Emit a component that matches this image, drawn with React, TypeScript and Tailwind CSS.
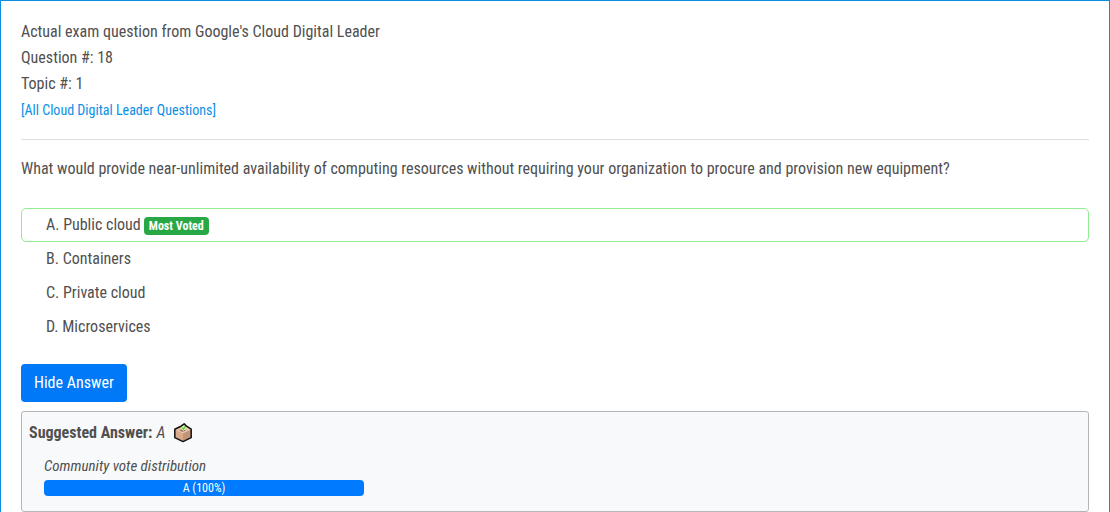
const choices = [
  { letter: "A", text: "Public cloud", mostVoted: true },
  { letter: "B", text: "Containers", mostVoted: false },
  { letter: "C", text: "Private cloud", mostVoted: false },
  { letter: "D", text: "Microservices", mostVoted: false },
];

const votes = [{ answer: "A", percent: 100 }];

function BallotBoxIcon() {
  return (
    <svg viewBox="0 0 20 20" className="block h-5 w-5" role="img" aria-label="Community vote">
      <path d="M2 6.2 10 10v8.5l-8-4z" fill="#d9ab8e" />
      <path d="M18 6.2 10 10v8.5l8-4z" fill="#c39376" />
      <path d="M2 6.2 8.5 3h4.5l5 3.2-8 4z" fill="#e9c8ae" />
      <path d="M6 6.8h7.5L11 8.4H8z" fill="#94715c" />
      <path d="m7.5 5 3.5-4.2L14.5 4 10.5 8z" fill="#dcf7b4" />
      <path d="m9 4.6 1.4 1.5 2.2-3" fill="none" stroke="#5cc524" strokeWidth="1.3" />
      <path
        d="M8 3.2 1.8 6.2v8.4L10 18.6l8.2-4V6.2L13.5 3.2 11.2.9z"
        fill="none"
        stroke="#111"
        strokeWidth="1.5"
        strokeLinejoin="round"
      />
    </svg>
  );
}

export default function App() {
  return (
    <main className="min-h-screen border-x border-t border-[#0a90e0] bg-white px-5 pt-[18px] font-['Roboto_Condensed',Roboto,sans-serif] text-base leading-[26px] text-[#505050]">
      <header className="border-b border-[#dfdfdf] pb-[15px]">
        <p>Actual exam question from Google's Cloud Digital Leader</p>
        <p>Question #: 18</p>
        <p>Topic #: 1</p>
        <a href="#questions" className="block text-sm leading-[27px] text-[#0a90e6]">
          [All Cloud Digital Leader Questions]
        </a>
      </header>

      <p className="pt-4">
        What would provide near-unlimited availability of computing resources without requiring your
        organization to procure and provision new equipment?
      </p>

      <ul className="mt-[26px]">
        {choices.map((c) => (
          <li
            key={c.letter}
            className={
              c.mostVoted
                ? "flex h-[34px] items-center gap-[3px] rounded-[5px] border border-[#90ee90] px-6"
                : "flex h-[34px] items-center gap-[3px] border border-transparent px-6"
            }
          >
            <span>
              {c.letter}. {c.text}
            </span>
            {c.mostVoted && (
              <span className="mt-0.5 rounded bg-[#28a745] px-[5px] text-xs leading-[18px] font-bold text-white">
                Most Voted
              </span>
            )}
          </li>
        ))}
      </ul>

      <button
        type="button"
        className="mt-5 block h-[38px] rounded bg-[#0079f8] px-[13px] text-base text-white"
      >
        Hide Answer
      </button>

      <section className="mt-[9px] rounded-[3px] border border-[#b4b7b9] bg-[#f8f9fa] px-[7px] pt-2 pb-[15px]">
        <div className="flex items-center gap-1">
          <strong className="font-bold">Suggested Answer:</strong>
          <em>A</em>
          <span className="ml-1">
            <BallotBoxIcon />
          </span>
        </div>
        <div className="ml-[15px] w-80 pt-2">
          <p className="pb-0.5 text-[15px] leading-6 italic">Community vote distribution</p>
          <div className="flex h-4 overflow-hidden rounded bg-[#e9ecef] text-xs leading-4 text-white">
            {votes.map((v) => (
              <div
                key={v.answer}
                className="bg-[#007bff] text-center"
                style={{ width: `${v.percent}%` }}
              >
                {v.answer} ({v.percent}%)
              </div>
            ))}
          </div>
        </div>
      </section>
    </main>
  );
}
